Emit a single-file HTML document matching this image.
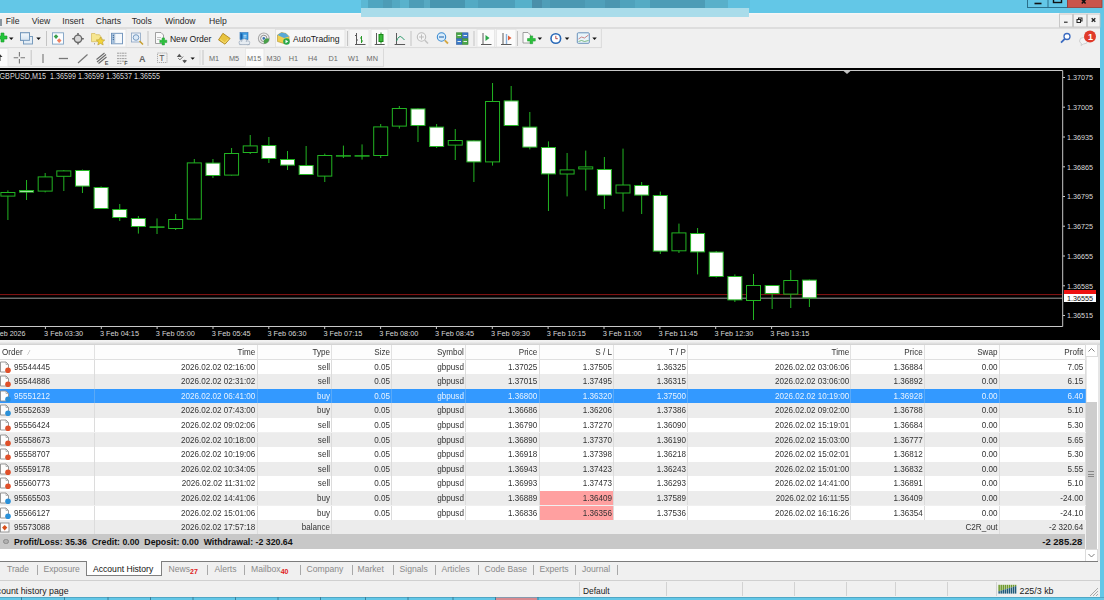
<!DOCTYPE html>
<html><head><meta charset="utf-8">
<style>
*{margin:0;padding:0;box-sizing:border-box}
html,body{width:1104px;height:600px;overflow:hidden;background:#f0f0f0;font-family:"Liberation Sans",sans-serif;color:#000}
.a{position:absolute}
#title{left:0;top:0;width:1104px;height:13px;background:#63c7e7}
#blurT{left:361px;top:0;width:389px;height:8.3px;background:linear-gradient(90deg,#5bb8d4 0.00%,#5bb8d4 1.80%,#4fa5c0 1.80%,#4fa5c0 5.66%,#4d9cb6 5.66%,#4d9cb6 7.97%,#53a8c2 7.97%,#53a8c2 10.03%,#58b2cc 10.03%,#58b2cc 12.34%,#4c9db7 12.34%,#4c9db7 16.20%,#56a9c2 16.20%,#56a9c2 17.74%,#4896b0 17.74%,#4896b0 26.74%,#53aac4 26.74%,#53aac4 30.08%,#4d9fba 30.08%,#4d9fba 39.59%,#56b0ca 39.59%,#56b0ca 43.96%,#4a8faa 43.96%,#4a8faa 46.53%,#509eb8 46.53%,#509eb8 48.59%,#4a98b2 48.59%,#4a98b2 57.58%,#4fa0ba 57.58%,#4fa0ba 62.72%,#4a96b0 62.72%,#4a96b0 66.58%,#4fa2bc 66.58%,#4fa2bc 70.44%,#55abc4 70.44%,#55abc4 74.29%,#4c9cb6 74.29%,#4c9cb6 88.43%,#58b0ca 88.43%,#58b0ca 94.34%,#60c0de 94.34%,#60c0de 100.00%);filter:blur(0.6px)}
#blurB{left:361px;top:8px;width:388px;height:9px;background:#a9dcea;z-index:4}
.wb{top:0;height:7.5px;border:1px solid #2a6f8a;border-top:none}
#rb{left:1100px;top:0;width:4px;height:600px;background:#63c7e7}
#menu{left:0;top:13px;width:1100px;height:15px;background:linear-gradient(#f8f8f8 0,#f0f0f0 2px)}
.mi{top:15.5px;font-size:8.6px;line-height:10px;color:#2a2a2a}
.mdi{top:13.6px;height:13.7px;width:13.6px;background:#f2f2f2;border:1px solid #c8c8c8;font-size:8px;text-align:center;line-height:12px;font-weight:bold}
.tb{background:#f0f0f0}
.sep{width:1px;background:#c9c9c9;border-right:1px solid #fff}
.tt{font-size:8.5px;line-height:10px;color:#1a1a1a}
.tf{font-size:7.6px;line-height:10px;color:#555;top:54px}
.pressed{background:#fafafa;border:1px solid #e3e3e3}
#chart{left:0;top:67.5px;width:1100px;height:272.5px;background:#000}
svg text.ct{font-family:"Liberation Sans",sans-serif;font-size:7.5px;fill:#d8d8d8}
.row{position:absolute;left:0;width:1085px;height:14.6px}
.vl{position:absolute;width:1px;height:14.6px;background:#dcdcdc}
.vl.vs{background:#5aa9f6}
.c{position:absolute;font-size:9.3px;letter-spacing:0;line-height:14.6px;text-align:right;white-space:nowrap;color:#333;transform:scaleX(0.87);transform-origin:100% 50%}
.c.l{transform-origin:0 50%}
.c.l{text-align:left}
.c.s{color:#e8f3ff}
.hv{position:absolute;top:344.5px;width:1px;height:15px;background:#e2e2e2}
.ic{position:absolute;left:1px;width:10px;height:11px}
.ic.sellic,.ic.buyic{border:1px solid #8a8a8a;border-radius:1px;background:#fff;width:8px;height:10px}
.ic i{position:absolute;left:3px;top:5px;width:6px;height:6px;border-radius:3px;background:#e05a2a}
.ic.buyic i{background:#2a8fd8}
.ic.bal{border:1px solid #9a9a9a;background:#fff;width:10px;height:10px}
.tab{top:563px;font-size:8.6px;line-height:13px;color:#8a8a8a}
.tsep{top:564.5px;width:1px;height:10px;background:#a8a8a8}
.sb{top:582.5px;height:16px;font-size:8.4px;line-height:16px;color:#1a1a1a}
.sbd{top:582px;width:1px;height:14px;background:#d2d2d2}
</style></head><body>
<div class="a" id="title"></div>
<div class="a" id="blurT"></div>
<div class="a" id="blurB"></div>
<div class="a" id="rb"></div>
<svg class="a" style="left:1020px;top:0;z-index:5" width="84" height="30" viewBox="1020 0 84 30">
<rect x="1027.5" y="-1" width="40" height="8.5" fill="#63c7e7" stroke="#2a6f8a" stroke-width="1"/>
<line x1="1048" y1="0" x2="1048" y2="7.5" stroke="#2a6f8a" stroke-width="1"/>
<rect x="1067.5" y="-1" width="34.5" height="8.5" fill="#c9544c" stroke="#9a3a34" stroke-width="0.8"/>
<path d="M1034.5 3.5 h7" stroke="#111" stroke-width="1.6"/>
<rect x="1053.5" y="-1" width="8" height="3.5" fill="none" stroke="#111" stroke-width="1.4"/>
<path d="M1081.8 -0.5 l3.8 4 M1085.6 -0.5 l-3.8 4" stroke="#111" stroke-width="1.6"/>
<rect x="1059.5" y="14" width="13" height="13" fill="#f2f2f2" stroke="#c4c4c4" stroke-width="0.9"/>
<rect x="1073.5" y="14" width="13" height="13" fill="#f2f2f2" stroke="#c4c4c4" stroke-width="0.9"/>
<rect x="1087.5" y="14" width="12.5" height="13" fill="#f2f2f2" stroke="#c4c4c4" stroke-width="0.9"/>
<path d="M1064 22.2 h3.6" stroke="#222" stroke-width="1.1"/>
<rect x="1078.5" y="18" width="3.5" height="3" fill="none" stroke="#222" stroke-width="1"/>
<rect x="1077" y="19.5" width="3.5" height="3" fill="#f2f2f2" stroke="#222" stroke-width="1"/>
<path d="M1091.7 18.2 l3.6 3.6 M1095.3 18.2 l-3.6 3.6" stroke="#222" stroke-width="1.3"/>
</svg>
<div class="a" id="menu"></div>
<div class="a" style="left:0;top:19px;width:1.8px;height:6.5px;background:#8a96a0"></div>
<div class="a mi" style="left:5.7px">File</div>
<div class="a mi" style="left:31.7px">View</div>
<div class="a mi" style="left:62.3px">Insert</div>
<div class="a mi" style="left:95.7px">Charts</div>
<div class="a mi" style="left:131.7px">Tools</div>
<div class="a mi" style="left:165px">Window</div>
<div class="a mi" style="left:209px">Help</div>

<svg class="a" style="left:0;top:0" width="1100" height="68" viewBox="0 0 1100 68">
<defs>
<linearGradient id="gwin" x1="0" y1="0" x2="0" y2="1"><stop offset="0" stop-color="#f4f8fc"/><stop offset="1" stop-color="#d6e4f0"/></linearGradient>
</defs>
<!-- toolbar frames -->
<line x1="0" y1="28" x2="1100" y2="28" stroke="#cacaca" stroke-width="1.1"/>
<line x1="0" y1="47.6" x2="601.4" y2="47.6" stroke="#dadada"/>
<line x1="601.4" y1="29" x2="601.4" y2="48" stroke="#dadada"/>
<line x1="0" y1="66.6" x2="383.5" y2="66.6" stroke="#dadada"/>
<line x1="383.5" y1="48.5" x2="383.5" y2="67" stroke="#dadada"/>
<!-- pressed backgrounds -->
<rect x="109" y="29.5" width="17" height="17.5" fill="#fbfbfb" stroke="#e4e4e4" stroke-width="0.8"/>
<rect x="275.4" y="29.5" width="69.6" height="17.5" fill="#f7f7f7" stroke="#dedede" stroke-width="0.8"/>
<rect x="349" y="29.5" width="20" height="17.5" fill="#f7f7f7" stroke="#e6e6e6" stroke-width="0.8"/>
<rect x="371" y="29.5" width="17" height="17.5" fill="#fbfbfb" stroke="#e4e4e4" stroke-width="0.8"/>
<rect x="477" y="29.5" width="17.6" height="17.5" fill="#fbfbfb" stroke="#e4e4e4" stroke-width="0.8"/>
<rect x="496.5" y="29.5" width="19.5" height="17.5" fill="#fbfbfb" stroke="#e4e4e4" stroke-width="0.8"/>
<rect x="-1" y="48.5" width="9" height="18" fill="#fbfbfb" stroke="#e4e4e4" stroke-width="0.8"/>
<rect x="245.5" y="48.5" width="18.5" height="18" fill="#fbfbfb" stroke="#e4e4e4" stroke-width="0.8"/>
<!-- separators -->
<g stroke="#c4c4c4" stroke-width="1">
<line x1="46.5" y1="31" x2="46.5" y2="46"/>
<line x1="148" y1="31" x2="148" y2="46"/>
<line x1="347.5" y1="31" x2="347.5" y2="46"/>
<line x1="411" y1="31" x2="411" y2="46"/>
<line x1="474" y1="31" x2="474" y2="46"/>
<line x1="517.5" y1="31" x2="517.5" y2="46"/>
<line x1="31.2" y1="50" x2="31.2" y2="65"/>
<line x1="200" y1="50" x2="200" y2="65" stroke="#dcdcdc"/>
<line x1="203" y1="50" x2="203" y2="65"/>
</g>
<!-- green plus (cut) -->
<path d="M-2 36 h3 v-3 h3 v3 h3 v3 h-3 v3 h-3 v-3 h-3z" fill="#22c43a" stroke="#179a2a" stroke-width="0.6"/>
<path d="M9 37.5 h4.5 l-2.25 2.5z" fill="#111"/>
<!-- profiles -->
<rect x="20.5" y="32.8" width="9" height="7.5" fill="url(#gwin)" stroke="#6e93b8" stroke-width="0.9"/>
<rect x="23.5" y="36.5" width="9" height="7.5" fill="#e3edf6" stroke="#6e93b8" stroke-width="0.9"/>
<rect x="20.5" y="32.8" width="9" height="7.5" fill="url(#gwin)" stroke="#6e93b8" stroke-width="0.9"/>
<path d="M36.3 37.5 h4.5 l-2.25 2.5z" fill="#111"/>
<!-- market watch -->
<rect x="52.5" y="32.8" width="11" height="11.3" fill="#fbfdff" stroke="#7ea2c4" stroke-width="0.9"/>
<path d="M53.7 36.6 l2.3 -2.3 l2.3 2.3 l-2.3 2.3z" fill="#3aa04a"/>
<path d="M56.9 40.6 l2.3 -2.3 l2.3 2.3 l-2.3 2.3z" fill="#f08060"/>
<!-- data window crosshair -->
<circle cx="78" cy="38.8" r="3.7" fill="#d8d8d8" stroke="#6a6a6a" stroke-width="1.4"/>
<path d="M78 33 v2 M78 42.6 v2 M72.2 38.8 h2 M81.8 38.8 h2" stroke="#6a6a6a" stroke-width="1.6"/>
<!-- navigator -->
<path d="M91.5 33.5 h3.5 l1 1.2 h3.5 l2.5 3.5 v3.5 h-10.5z" fill="#f6e690" stroke="#d2b85a" stroke-width="0.7"/><path d="M94.5 43 v1.5" stroke="#888" stroke-width="0.7"/>
<path d="M100.5 37 l1.3 2.7 l3 .3 l-2.3 2 l.7 3 l-2.7 -1.6 l-2.7 1.6 l.7 -3 l-2.3 -2 l3 -.3z" fill="#f2d43a" stroke="#b89a30" stroke-width="0.6"/>
<!-- terminal -->
<rect x="111.5" y="33.3" width="11" height="10.5" fill="#f4f8fc" stroke="#6a8fb8" stroke-width="0.9"/>
<rect x="112.2" y="34" width="2.3" height="9.2" fill="#9ab8d8"/><path d="M113.3 35 v1 M113.3 37 v1 M113.3 39 v1" stroke="#2a5a90" stroke-width="0.9"/><path d="M114.8 34 v9.2" stroke="#8aa0b8" stroke-width="0.5"/>
<!-- tester -->
<rect x="131.5" y="33" width="9" height="9" fill="#edf2f8" stroke="#8aa4c2" stroke-width="0.8"/>
<circle cx="136" cy="37.5" r="2.8" fill="#dce9f6" stroke="#5b86b4" stroke-width="0.8"/>
<path d="M139.5 41 l3.5 3.5" stroke="#c9a030" stroke-width="1.6"/>
<!-- new order -->
<path d="M155.5 32.5 h5.5 l2.5 2.5 v8.5 h-8z" fill="#fafafa" stroke="#8a8a8a" stroke-width="0.8"/>
<path d="M157 37.5 h4 M157 39.5 h3" stroke="#aaa" stroke-width="0.7"/><path d="M159.8 40.2 h2.3 v-2.3 h2.4 v2.3 h2.3 v2.4 h-2.3 v2.3 h-2.4 v-2.3 h-2.3z" fill="#2cc03c" stroke="#179a2a" stroke-width="0.5"/>
<text x="169.9" y="41.6" class="tt" style="font-size:8.6px;fill:#1a1a1a">New Order</text>
<!-- metaeditor -->
<path d="M218.5 39.9 l4.4 -6.6 l7.2 5.1 l-5.1 5.8z" fill="#e9c43e" stroke="#a87d12" stroke-width="0.8"/>
<path d="M220.5 39.5 l4.3 3.5 l3.5 -4" stroke="#f8e68a" stroke-width="0.8" fill="none"/>
<!-- community -->
<rect x="240" y="32.6" width="8" height="7" fill="#3a9ae0" stroke="#2570b8" stroke-width="0.6"/><path d="M243.5 35.3 h3 M243.5 37 h3" stroke="#e8f4ff" stroke-width="0.8"/><rect x="240.6" y="33.4" width="1.8" height="5.5" fill="#1a60a8"/>
<g fill="#e6ecf2" stroke="#9aa8ba" stroke-width="0.7"><circle cx="241" cy="42.6" r="2"/><circle cx="244.3" cy="41.5" r="2.7"/><circle cx="247.8" cy="42.8" r="2"/></g><rect x="240.5" y="42" width="7.5" height="2.6" fill="#e6ecf2"/><path d="M239.2 44.6 h10.5" stroke="#9aa8ba" stroke-width="0.7"/>
<!-- signals -->
<circle cx="263.8" cy="38.4" r="5.4" fill="none" stroke="#a8a8a8" stroke-width="1.1"/>
<circle cx="263.8" cy="38.4" r="3.2" fill="none" stroke="#909090" stroke-width="1"/><circle cx="263.8" cy="38.4" r="1.3" fill="#3a70b0"/>
<path d="M265.3 38.4 h3.9 a5.4 5.4 0 0 1 -5.4 5.4 v-3.9 a1.5 1.5 0 0 0 1.5 -1.5z" fill="#48a048"/>
<!-- autotrading -->
<path d="M277.5 35 l4 -2.5 l4.5 1 l3 3 v4 l-5 3 l-6.5 -2z" fill="#f0d050" stroke="#b09030" stroke-width="0.6"/>
<path d="M277.5 35 l4 -2.5 l4.5 1 l3 3 l-5 1.5z" fill="#58a8d8"/>
<circle cx="286.5" cy="41.5" r="3.3" fill="#2aa84a"/>
<path d="M285.5 39.8 v3.4 l2.8 -1.7z" fill="#fff"/>
<text x="293" y="41.6" class="tt" style="font-size:8.6px;fill:#1a1a1a">AutoTrading</text>
<!-- bar chart -->
<g stroke="#5a5a5a" stroke-width="1" fill="none">
<path d="M355 44.5 h10.5 M356.5 33 v11.5 M355 35.5 h1.5 M356.5 40 h1.5"/>
<path d="M361.5 36 v7 M360 38 h1.5 M361.5 41 h1.5" stroke="#2a9a2a"/>
</g>
<!-- candle chart -->
<g fill="none" stroke-width="1">
<path d="M374.7 44.5 h10 M376.5 33 v11.5" stroke="#5a5a5a"/>
<rect x="379" y="34.5" width="4" height="7" fill="#3aba3a" stroke="#1a8a1a"/>
<path d="M381 32.5 v2 M381 41.5 v2" stroke="#1a8a1a"/>
</g>
<!-- line chart -->
<g fill="none" stroke-width="1">
<path d="M394.6 44.5 h10.5 M396.5 33 v11.5" stroke="#5a5a5a"/>
<path d="M396.5 41 q2.5 -6 5 -4 l3 3" stroke="#2a9a6a"/>
</g>
<!-- zoom in (disabled) -->
<circle cx="421.5" cy="37" r="4.2" fill="#f4f4f4" stroke="#bdbdbd" stroke-width="1.1"/>
<path d="M419 37 h5 M421.5 34.5 v5" stroke="#bdbdbd" stroke-width="1"/>
<path d="M424.8 40.3 l3.2 3.2" stroke="#c4c4c4" stroke-width="1.6"/>
<!-- zoom out -->
<circle cx="441.5" cy="37" r="4.2" fill="#d8ecfb" stroke="#3a8ad0" stroke-width="1.1"/>
<path d="M439 37 h5" stroke="#2a6ab0" stroke-width="1.1"/>
<path d="M444.8 40.3 l3.2 3.2" stroke="#d4a640" stroke-width="1.8"/>
<!-- tile -->
<rect x="456.5" y="32.8" width="5.5" height="5.5" fill="#4aa84a" stroke="#2a7a2a" stroke-width="0.6"/>
<rect x="462.5" y="32.8" width="5.5" height="5.5" fill="#3a78c8" stroke="#2a5a9a" stroke-width="0.6"/>
<rect x="456.5" y="38.8" width="5.5" height="5.5" fill="#3a78c8" stroke="#2a5a9a" stroke-width="0.6"/>
<rect x="462.5" y="38.8" width="5.5" height="5.5" fill="#4aa84a" stroke="#2a7a2a" stroke-width="0.6"/>
<path d="M457.5 35.5 h3.5 M463.5 35.5 h3.5 M457.5 41.5 h3.5 M463.5 41.5 h3.5" stroke="#e8f0e8" stroke-width="1"/>
<!-- auto scroll -->
<path d="M481 44.5 h10.5 M483 33 v11.5" stroke="#5a5a5a" stroke-width="1"/>
<path d="M485.5 35 v6 l4 -3z" fill="#2aa84a"/>
<!-- chart shift -->
<path d="M501 44.5 h10.5 M503 33 v11.5 M506.5 34 v10" stroke="#5a5a5a" stroke-width="1"/>
<path d="M508 35.5 v5 l3.5 -2.5z" fill="#e0603a"/>
<rect x="505.8" y="34" width="1.4" height="10" fill="#8ab0d8"/>
<!-- indicators -->
<path d="M523 32.5 h5 l2.5 2.5 v8 h-7.5z" fill="#fafafa" stroke="#8a8a8a" stroke-width="0.8"/>
<path d="M527.5 38.5 h2.6 v-2.6 h2.6 v2.6 h2.6 v2.6 h-2.6 v2.6 h-2.6 v-2.6 h-2.6z" fill="#2cc03c" stroke="#179a2a" stroke-width="0.5"/>
<path d="M537.6 37.5 h4.5 l-2.25 2.5z" fill="#111"/>
<!-- clock -->
<circle cx="555.8" cy="38.5" r="5.6" fill="#2a6ab8"/>
<circle cx="555.8" cy="38.5" r="4" fill="#fff"/>
<path d="M555.8 35.8 v2.9 h2" stroke="#a02020" stroke-width="0.8" fill="none"/>
<path d="M564.8 37.5 h4.5 l-2.25 2.5z" fill="#111"/>
<!-- templates -->
<rect x="577.3" y="32.8" width="12" height="10.5" rx="1" fill="#e8f4fa" stroke="#5b86b4" stroke-width="0.9"/>
<path d="M578.5 39 l3 -2 l3 1 l4 -3" stroke="#c05050" stroke-width="0.7" fill="none"/>
<path d="M578.5 41.5 l3 -1 l3 1 l4 -1" stroke="#50a050" stroke-width="0.7" fill="none"/>
<path d="M592.3 37.5 h4.5 l-2.25 2.5z" fill="#111"/>
<!-- right side search / notification -->
<circle cx="1067" cy="36.5" r="3" fill="#fff" stroke="#3a6ac0" stroke-width="1.3"/>
<path d="M1064.8 38.8 l-3.8 3.8" stroke="#3a6ac0" stroke-width="1.8"/>
<path d="M1079.5 41 q0 -3.5 4 -3.5 q4 0 4 3.5 q0 3 -4 3 l-2.5 1.5 l.5 -2 q-2 -.8 -2 -2.5z" fill="#f4f4f4" stroke="#c8c8c8" stroke-width="0.8"/>
<circle cx="1090" cy="36.5" r="6" fill="#e03a2a"/>
<text x="1088" y="40" style="font-family:'Liberation Sans',sans-serif;font-size:9px;font-weight:bold;fill:#fff">1</text>

<!-- toolbar 2 -->
<path d="M-1 53 l3.5 4 h-2 v4 h-3 v-4 h-2z" fill="#333"/>
<path d="M19.4 52 v4.5 M19.4 59 v4.5 M13.7 57.8 h4.5 M20.5 57.8 h4.5" stroke="#777" stroke-width="1.1"/>
<path d="M43 54 v9" stroke="#888" stroke-width="1.3"/>
<path d="M58.8 58.5 h9.2" stroke="#777" stroke-width="1.3"/>
<path d="M78 63 l9.5 -8.5" stroke="#777" stroke-width="1.2"/>
<path d="M96.5 59.5 l8 -6.5 M97 62 l9 -7.5 M98.5 63.5 l8 -6.5" stroke="#6a6a6a" stroke-width="1.1"/>
<text x="104.8" y="64.5" style="font-family:'Liberation Sans',sans-serif;font-size:5.5px;font-weight:bold;fill:#555">E</text>
<path d="M117 53.2 h10 M117 55.8 h10 M117 58.6 h10 M117 61.2 h10 M117 63.5 h5" stroke="#8a8a8a" stroke-width="0.8" stroke-dasharray="2 0.5"/>
<text x="124.3" y="65" style="font-family:'Liberation Sans',sans-serif;font-size:5.5px;font-weight:bold;fill:#555">F</text>
<text x="139" y="61.5" style="font-family:'Liberation Sans',sans-serif;font-size:9px;font-weight:bold;fill:#666">A</text>
<rect x="157.5" y="53" width="9.5" height="9.5" fill="none" stroke="#999" stroke-width="0.8" stroke-dasharray="1.2 0.8"/>
<text x="159.3" y="61" style="font-family:'Liberation Sans',sans-serif;font-size:8.5px;fill:#555">T</text>
<path d="M176.8 57 l2.5 -3.3 l2.5 3.3z" fill="#555"/><path d="M178.3 58.2 l1.6 1.6 l3.2 -3.2" stroke="#666" stroke-width="1" fill="none"/><path d="M182.3 60.5 l2.35 -0.7 l2.35 0.7 l-2.35 2.8z" fill="#555"/>
<path d="M190.5 57.6 h4.3 l-2.15 2.2z" fill="#111"/>
<g style="font-family:'Liberation Sans',sans-serif;font-size:7.3px;fill:#6a6a6a">
<text x="209" y="61">M1</text>
<text x="229" y="61">M5</text>
<text x="247" y="61">M15</text>
<text x="266.6" y="61">M30</text>
<text x="288.7" y="61">H1</text>
<text x="308" y="61">H4</text>
<text x="328.5" y="61">D1</text>
<text x="348" y="61">W1</text>
<text x="366.6" y="61">MN</text>
</g>
</svg>


<div class="a" id="chart"></div>
<svg class="a" style="left:0;top:0" width="1100" height="341" viewBox="0 0 1100 341">
<text x="-0.5" y="78.8" class="ct" style="font-size:8.3px;white-space:pre" xml:space="preserve" textLength="160.5" lengthAdjust="spacingAndGlyphs">GBPUSD,M15  1.36599 1.36599 1.36537 1.36555</text>
<path d="M843 70.5 L851 70.5 L847 74 Z" fill="#c0c0c0"/>
<polyline points="0,70.5 1062.7,70.5 1062.7,326.5 0,326.5" fill="none" stroke="#c8c8c8" stroke-width="1"/>
<line x1="0" y1="294.6" x2="1062" y2="294.6" stroke="#8a1414" stroke-width="1"/>
<line x1="0" y1="298.2" x2="1062" y2="298.2" stroke="#9a9a9a" stroke-width="1"/>
<line x1="7.90" y1="190.4" x2="7.90" y2="220.0" stroke="#22b422" stroke-width="1"/>
<rect x="0.90" y="192.5" width="14" height="3.6" fill="#000" stroke="#22b422" stroke-width="1"/>
<line x1="26.54" y1="180.0" x2="26.54" y2="200.0" stroke="#22b422" stroke-width="1"/>
<rect x="19.54" y="190.5" width="14" height="1.6" fill="#fff" stroke="#22b422" stroke-width="1"/>
<line x1="45.18" y1="173.0" x2="45.18" y2="192.4" stroke="#22b422" stroke-width="1"/>
<rect x="38.18" y="176.9" width="14" height="14.2" fill="#000" stroke="#22b422" stroke-width="1"/>
<line x1="63.82" y1="170.0" x2="63.82" y2="191.0" stroke="#22b422" stroke-width="1"/>
<rect x="56.82" y="170.9" width="14" height="5.4" fill="#000" stroke="#22b422" stroke-width="1"/>
<line x1="82.46" y1="169.6" x2="82.46" y2="193.0" stroke="#22b422" stroke-width="1"/>
<rect x="75.46" y="170.5" width="14" height="15.6" fill="#fff" stroke="#22b422" stroke-width="1"/>
<line x1="101.10" y1="186.4" x2="101.10" y2="209.0" stroke="#22b422" stroke-width="1"/>
<rect x="94.10" y="187.5" width="14" height="21.0" fill="#fff" stroke="#22b422" stroke-width="1"/>
<line x1="119.74" y1="204.0" x2="119.74" y2="221.0" stroke="#22b422" stroke-width="1"/>
<rect x="112.74" y="209.5" width="14" height="8.0" fill="#fff" stroke="#22b422" stroke-width="1"/>
<line x1="138.38" y1="216.0" x2="138.38" y2="233.6" stroke="#22b422" stroke-width="1"/>
<rect x="131.38" y="218.5" width="14" height="8.0" fill="#fff" stroke="#22b422" stroke-width="1"/>
<line x1="157.02" y1="218.4" x2="157.02" y2="234.0" stroke="#22b422" stroke-width="1"/>
<line x1="149.52" y1="227.1" x2="164.52" y2="227.1" stroke="#22b422" stroke-width="1.5"/>
<line x1="175.66" y1="214.0" x2="175.66" y2="230.0" stroke="#22b422" stroke-width="1"/>
<rect x="168.66" y="219.5" width="14" height="9.0" fill="#000" stroke="#22b422" stroke-width="1"/>
<line x1="194.30" y1="159.0" x2="194.30" y2="219.6" stroke="#22b422" stroke-width="1"/>
<rect x="187.30" y="162.9" width="14" height="56.2" fill="#000" stroke="#22b422" stroke-width="1"/>
<line x1="212.94" y1="159.0" x2="212.94" y2="178.0" stroke="#22b422" stroke-width="1"/>
<rect x="205.94" y="163.1" width="14" height="12.4" fill="#fff" stroke="#22b422" stroke-width="1"/>
<line x1="231.58" y1="148.0" x2="231.58" y2="175.6" stroke="#22b422" stroke-width="1"/>
<rect x="224.58" y="153.5" width="14" height="21.6" fill="#000" stroke="#22b422" stroke-width="1"/>
<line x1="250.22" y1="135.0" x2="250.22" y2="154.0" stroke="#22b422" stroke-width="1"/>
<rect x="243.22" y="145.9" width="14" height="6.6" fill="#000" stroke="#22b422" stroke-width="1"/>
<line x1="268.86" y1="137.0" x2="268.86" y2="163.0" stroke="#22b422" stroke-width="1"/>
<rect x="261.86" y="145.5" width="14" height="13.0" fill="#fff" stroke="#22b422" stroke-width="1"/>
<line x1="287.50" y1="151.0" x2="287.50" y2="170.0" stroke="#22b422" stroke-width="1"/>
<rect x="280.50" y="159.5" width="14" height="5.6" fill="#fff" stroke="#22b422" stroke-width="1"/>
<line x1="306.14" y1="146.0" x2="306.14" y2="175.0" stroke="#22b422" stroke-width="1"/>
<rect x="299.14" y="165.5" width="14" height="9.0" fill="#fff" stroke="#22b422" stroke-width="1"/>
<line x1="324.78" y1="153.6" x2="324.78" y2="182.0" stroke="#22b422" stroke-width="1"/>
<rect x="317.78" y="155.5" width="14" height="20.6" fill="#000" stroke="#22b422" stroke-width="1"/>
<line x1="343.42" y1="145.6" x2="343.42" y2="158.0" stroke="#22b422" stroke-width="1"/>
<line x1="335.92" y1="155.9" x2="350.92" y2="155.9" stroke="#22b422" stroke-width="1.5"/>
<line x1="362.06" y1="144.4" x2="362.06" y2="159.6" stroke="#22b422" stroke-width="1"/>
<line x1="354.56" y1="155.9" x2="369.56" y2="155.9" stroke="#22b422" stroke-width="1.5"/>
<line x1="380.70" y1="124.0" x2="380.70" y2="158.0" stroke="#22b422" stroke-width="1"/>
<rect x="373.70" y="126.9" width="14" height="28.6" fill="#000" stroke="#22b422" stroke-width="1"/>
<line x1="399.34" y1="106.0" x2="399.34" y2="128.6" stroke="#22b422" stroke-width="1"/>
<rect x="392.34" y="108.5" width="14" height="17.6" fill="#000" stroke="#22b422" stroke-width="1"/>
<line x1="417.98" y1="108.4" x2="417.98" y2="142.0" stroke="#22b422" stroke-width="1"/>
<rect x="410.98" y="108.9" width="14" height="16.6" fill="#fff" stroke="#22b422" stroke-width="1"/>
<line x1="436.62" y1="124.0" x2="436.62" y2="148.0" stroke="#22b422" stroke-width="1"/>
<rect x="429.62" y="127.1" width="14" height="19.4" fill="#fff" stroke="#22b422" stroke-width="1"/>
<line x1="455.26" y1="129.0" x2="455.26" y2="160.0" stroke="#22b422" stroke-width="1"/>
<rect x="448.26" y="140.5" width="14" height="4.6" fill="#000" stroke="#22b422" stroke-width="1"/>
<line x1="473.90" y1="140.4" x2="473.90" y2="182.0" stroke="#22b422" stroke-width="1"/>
<rect x="466.90" y="140.9" width="14" height="21.0" fill="#fff" stroke="#22b422" stroke-width="1"/>
<line x1="492.54" y1="83.0" x2="492.54" y2="165.6" stroke="#22b422" stroke-width="1"/>
<rect x="485.54" y="101.5" width="14" height="60.4" fill="#000" stroke="#22b422" stroke-width="1"/>
<line x1="511.18" y1="86.0" x2="511.18" y2="126.0" stroke="#22b422" stroke-width="1"/>
<rect x="504.18" y="100.9" width="14" height="24.6" fill="#fff" stroke="#22b422" stroke-width="1"/>
<line x1="529.82" y1="112.0" x2="529.82" y2="149.4" stroke="#22b422" stroke-width="1"/>
<rect x="522.82" y="127.1" width="14" height="20.0" fill="#fff" stroke="#22b422" stroke-width="1"/>
<line x1="548.46" y1="141.4" x2="548.46" y2="211.0" stroke="#22b422" stroke-width="1"/>
<rect x="541.46" y="147.5" width="14" height="26.4" fill="#fff" stroke="#22b422" stroke-width="1"/>
<line x1="567.10" y1="153.0" x2="567.10" y2="196.4" stroke="#22b422" stroke-width="1"/>
<rect x="560.10" y="169.9" width="14" height="4.1" fill="#000" stroke="#22b422" stroke-width="1"/>
<line x1="585.74" y1="150.6" x2="585.74" y2="190.5" stroke="#22b422" stroke-width="1"/>
<rect x="578.74" y="166.9" width="14" height="2.0" fill="#000" stroke="#22b422" stroke-width="1"/>
<line x1="604.38" y1="157.0" x2="604.38" y2="209.0" stroke="#22b422" stroke-width="1"/>
<rect x="597.38" y="169.5" width="14" height="25.6" fill="#fff" stroke="#22b422" stroke-width="1"/>
<line x1="623.02" y1="148.6" x2="623.02" y2="211.6" stroke="#22b422" stroke-width="1"/>
<rect x="616.02" y="185.0" width="14" height="8.0" fill="#000" stroke="#22b422" stroke-width="1"/>
<line x1="641.66" y1="182.0" x2="641.66" y2="214.0" stroke="#22b422" stroke-width="1"/>
<rect x="634.66" y="185.5" width="14" height="9.6" fill="#fff" stroke="#22b422" stroke-width="1"/>
<line x1="660.30" y1="191.6" x2="660.30" y2="254.0" stroke="#22b422" stroke-width="1"/>
<rect x="653.30" y="195.5" width="14" height="55.6" fill="#fff" stroke="#22b422" stroke-width="1"/>
<line x1="678.94" y1="223.6" x2="678.94" y2="253.0" stroke="#22b422" stroke-width="1"/>
<rect x="671.94" y="232.9" width="14" height="17.9" fill="#000" stroke="#22b422" stroke-width="1"/>
<line x1="697.58" y1="228.0" x2="697.58" y2="274.4" stroke="#22b422" stroke-width="1"/>
<rect x="690.58" y="233.5" width="14" height="18.4" fill="#fff" stroke="#22b422" stroke-width="1"/>
<line x1="716.22" y1="251.0" x2="716.22" y2="277.6" stroke="#22b422" stroke-width="1"/>
<rect x="709.22" y="252.1" width="14" height="24.4" fill="#fff" stroke="#22b422" stroke-width="1"/>
<line x1="734.86" y1="274.4" x2="734.86" y2="302.0" stroke="#22b422" stroke-width="1"/>
<rect x="727.86" y="276.5" width="14" height="23.4" fill="#fff" stroke="#22b422" stroke-width="1"/>
<line x1="753.50" y1="274.0" x2="753.50" y2="320.0" stroke="#22b422" stroke-width="1"/>
<rect x="746.50" y="285.5" width="14" height="15.0" fill="#000" stroke="#22b422" stroke-width="1"/>
<line x1="772.14" y1="285.0" x2="772.14" y2="309.0" stroke="#22b422" stroke-width="1"/>
<rect x="765.14" y="285.5" width="14" height="8.0" fill="#fff" stroke="#22b422" stroke-width="1"/>
<line x1="790.78" y1="270.0" x2="790.78" y2="308.0" stroke="#22b422" stroke-width="1"/>
<rect x="783.78" y="280.5" width="14" height="13.6" fill="#000" stroke="#22b422" stroke-width="1"/>
<line x1="809.42" y1="279.6" x2="809.42" y2="307.0" stroke="#22b422" stroke-width="1"/>
<rect x="802.42" y="280.1" width="14" height="17.8" fill="#fff" stroke="#22b422" stroke-width="1"/>
<line x1="1063" y1="77.5" x2="1065" y2="77.5" stroke="#c8c8c8" stroke-width="1"/>
<text x="1067" y="80.3" class="ct" textLength="26.1" lengthAdjust="spacingAndGlyphs">1.37075</text>
<line x1="1063" y1="107.2" x2="1065" y2="107.2" stroke="#c8c8c8" stroke-width="1"/>
<text x="1067" y="110.0" class="ct" textLength="26.1" lengthAdjust="spacingAndGlyphs">1.37005</text>
<line x1="1063" y1="137.0" x2="1065" y2="137.0" stroke="#c8c8c8" stroke-width="1"/>
<text x="1067" y="139.8" class="ct" textLength="26.1" lengthAdjust="spacingAndGlyphs">1.36935</text>
<line x1="1063" y1="166.8" x2="1065" y2="166.8" stroke="#c8c8c8" stroke-width="1"/>
<text x="1067" y="169.6" class="ct" textLength="26.1" lengthAdjust="spacingAndGlyphs">1.36865</text>
<line x1="1063" y1="196.5" x2="1065" y2="196.5" stroke="#c8c8c8" stroke-width="1"/>
<text x="1067" y="199.3" class="ct" textLength="26.1" lengthAdjust="spacingAndGlyphs">1.36795</text>
<line x1="1063" y1="226.2" x2="1065" y2="226.2" stroke="#c8c8c8" stroke-width="1"/>
<text x="1067" y="229.1" class="ct" textLength="26.1" lengthAdjust="spacingAndGlyphs">1.36725</text>
<line x1="1063" y1="256.0" x2="1065" y2="256.0" stroke="#c8c8c8" stroke-width="1"/>
<text x="1067" y="258.8" class="ct" textLength="26.1" lengthAdjust="spacingAndGlyphs">1.36655</text>
<line x1="1063" y1="285.8" x2="1065" y2="285.8" stroke="#c8c8c8" stroke-width="1"/>
<text x="1067" y="288.6" class="ct" textLength="26.1" lengthAdjust="spacingAndGlyphs">1.36585</text>
<line x1="1063" y1="315.5" x2="1065" y2="315.5" stroke="#c8c8c8" stroke-width="1"/>
<text x="1067" y="318.3" class="ct" textLength="26.1" lengthAdjust="spacingAndGlyphs">1.36515</text>
<rect x="1064" y="290" width="32" height="4" fill="#ee1111"/>
<rect x="1064" y="294" width="32" height="8" fill="#fff"/>
<text x="1067" y="300.8" class="ct" style="fill:#111" textLength="26.1" lengthAdjust="spacingAndGlyphs">1.36555</text>
<line x1="45.4" y1="326" x2="45.4" y2="329" stroke="#c8c8c8" stroke-width="1"/>
<text x="44.1" y="335.5" class="ct" style="font-size:8px" textLength="39" lengthAdjust="spacingAndGlyphs">3 Feb 03:30</text>
<line x1="101.3" y1="326" x2="101.3" y2="329" stroke="#c8c8c8" stroke-width="1"/>
<text x="100.0" y="335.5" class="ct" style="font-size:8px" textLength="39" lengthAdjust="spacingAndGlyphs">3 Feb 04:15</text>
<line x1="157.1" y1="326" x2="157.1" y2="329" stroke="#c8c8c8" stroke-width="1"/>
<text x="155.8" y="335.5" class="ct" style="font-size:8px" textLength="39" lengthAdjust="spacingAndGlyphs">3 Feb 05:00</text>
<line x1="213.0" y1="326" x2="213.0" y2="329" stroke="#c8c8c8" stroke-width="1"/>
<text x="211.7" y="335.5" class="ct" style="font-size:8px" textLength="39" lengthAdjust="spacingAndGlyphs">3 Feb 05:45</text>
<line x1="268.8" y1="326" x2="268.8" y2="329" stroke="#c8c8c8" stroke-width="1"/>
<text x="267.5" y="335.5" class="ct" style="font-size:8px" textLength="39" lengthAdjust="spacingAndGlyphs">3 Feb 06:30</text>
<line x1="324.7" y1="326" x2="324.7" y2="329" stroke="#c8c8c8" stroke-width="1"/>
<text x="323.4" y="335.5" class="ct" style="font-size:8px" textLength="39" lengthAdjust="spacingAndGlyphs">3 Feb 07:15</text>
<line x1="380.6" y1="326" x2="380.6" y2="329" stroke="#c8c8c8" stroke-width="1"/>
<text x="379.3" y="335.5" class="ct" style="font-size:8px" textLength="39" lengthAdjust="spacingAndGlyphs">3 Feb 08:00</text>
<line x1="436.4" y1="326" x2="436.4" y2="329" stroke="#c8c8c8" stroke-width="1"/>
<text x="435.1" y="335.5" class="ct" style="font-size:8px" textLength="39" lengthAdjust="spacingAndGlyphs">3 Feb 08:45</text>
<line x1="492.3" y1="326" x2="492.3" y2="329" stroke="#c8c8c8" stroke-width="1"/>
<text x="491.0" y="335.5" class="ct" style="font-size:8px" textLength="39" lengthAdjust="spacingAndGlyphs">3 Feb 09:30</text>
<line x1="548.1" y1="326" x2="548.1" y2="329" stroke="#c8c8c8" stroke-width="1"/>
<text x="546.8" y="335.5" class="ct" style="font-size:8px" textLength="39" lengthAdjust="spacingAndGlyphs">3 Feb 10:15</text>
<line x1="604.0" y1="326" x2="604.0" y2="329" stroke="#c8c8c8" stroke-width="1"/>
<text x="602.7" y="335.5" class="ct" style="font-size:8px" textLength="39" lengthAdjust="spacingAndGlyphs">3 Feb 11:00</text>
<line x1="659.9" y1="326" x2="659.9" y2="329" stroke="#c8c8c8" stroke-width="1"/>
<text x="658.6" y="335.5" class="ct" style="font-size:8px" textLength="39" lengthAdjust="spacingAndGlyphs">3 Feb 11:45</text>
<line x1="715.7" y1="326" x2="715.7" y2="329" stroke="#c8c8c8" stroke-width="1"/>
<text x="714.4" y="335.5" class="ct" style="font-size:8px" textLength="39" lengthAdjust="spacingAndGlyphs">3 Feb 12:30</text>
<line x1="771.6" y1="326" x2="771.6" y2="329" stroke="#c8c8c8" stroke-width="1"/>
<text x="770.3" y="335.5" class="ct" style="font-size:8px" textLength="39" lengthAdjust="spacingAndGlyphs">3 Feb 13:15</text>
<text x="-10.5" y="335.7" class="ct" style="font-size:8px" textLength="36" lengthAdjust="spacingAndGlyphs">3 Feb 2026</text>
</svg>

<!-- terminal -->
<div class="a" style="left:0;top:340px;width:1100px;height:4.8px;background:linear-gradient(#f3f3f3 0,#f0f0f0 35%,#d6d6d6 85%,#d0d0d0 100%)"></div>
<div class="a" style="left:0;top:344.5px;width:1085px;height:15px;background:#fdfdfd;border-bottom:1px solid #e0e0e0"></div>
<div class="c l" style="left:2px;top:345.1px;line-height:14px;letter-spacing:0">Order <span style="color:#999;font-size:7px;margin-left:4px">&#8260;</span></div>
<div class="c" style="left:94.2px;width:161.3px;top:345.1px;line-height:14px;letter-spacing:0">Time</div>
<div class="hv" style="left:93.70px"></div>
<div class="c" style="left:257.5px;width:72.0px;top:345.1px;line-height:14px;letter-spacing:0">Type</div>
<div class="hv" style="left:257.00px"></div>
<div class="c" style="left:331.5px;width:58.0px;top:345.1px;line-height:14px;letter-spacing:0">Size</div>
<div class="hv" style="left:331.00px"></div>
<div class="c" style="left:391.5px;width:71.9px;top:345.1px;line-height:14px;letter-spacing:0">Symbol</div>
<div class="hv" style="left:391.00px"></div>
<div class="c" style="left:465.4px;width:72.2px;top:345.1px;line-height:14px;letter-spacing:0">Price</div>
<div class="hv" style="left:464.90px"></div>
<div class="c" style="left:539.6px;width:72.0px;top:345.1px;line-height:14px;letter-spacing:0">S / L</div>
<div class="hv" style="left:539.10px"></div>
<div class="c" style="left:613.6px;width:72.0px;top:345.1px;line-height:14px;letter-spacing:0">T / P</div>
<div class="hv" style="left:613.10px"></div>
<div class="c" style="left:687.6px;width:161.3px;top:345.1px;line-height:14px;letter-spacing:0">Time</div>
<div class="hv" style="left:687.10px"></div>
<div class="c" style="left:850.9px;width:71.7px;top:345.1px;line-height:14px;letter-spacing:0">Price</div>
<div class="hv" style="left:850.40px"></div>
<div class="c" style="left:924.6px;width:72.4px;top:345.1px;line-height:14px;letter-spacing:0">Swap</div>
<div class="hv" style="left:924.10px"></div>
<div class="c" style="left:999.0px;width:84.2px;top:345.1px;line-height:14px;letter-spacing:0">Profit</div>
<div class="hv" style="left:998.50px"></div>
<div class="hv" style="left:1084.80px"></div>
<div class="row" style="top:359.5px;background:#ffffff"></div>
<div class="vl" style="left:93.70px;top:359.5px"></div>
<div class="vl" style="left:257.00px;top:359.5px"></div>
<div class="vl" style="left:331.00px;top:359.5px"></div>
<div class="vl" style="left:391.00px;top:359.5px"></div>
<div class="vl" style="left:464.90px;top:359.5px"></div>
<div class="vl" style="left:539.10px;top:359.5px"></div>
<div class="vl" style="left:613.10px;top:359.5px"></div>
<div class="vl" style="left:687.10px;top:359.5px"></div>
<div class="vl" style="left:850.40px;top:359.5px"></div>
<div class="vl" style="left:924.10px;top:359.5px"></div>
<div class="vl" style="left:998.50px;top:359.5px"></div>
<div class="vl" style="left:1084.80px;top:359.5px"></div>
<svg class="a" style="left:0;top:359.5px" width="13" height="15"><path d="M0.5 2 h5.5 l2.5 2.5 v7.5 h-8z" fill="#fdfdfd" stroke="#8c8c8c" stroke-width="0.9"/><path d="M6 2 v2.5 h2.5" fill="none" stroke="#9a9a9a" stroke-width="0.7"/><circle cx="8" cy="10.3" r="2.8" fill="#e0502a"/></svg>
<div class="c l" style="left:14px;top:359.6px">95544445</div>
<div class="c " style="left:94.2px;width:161.3px;top:359.6px">2026.02.02 02:16:00</div>
<div class="c " style="left:257.5px;width:72.0px;top:359.6px">sell</div>
<div class="c " style="left:331.5px;width:58.0px;top:359.6px">0.05</div>
<div class="c " style="left:391.5px;width:71.9px;top:359.6px">gbpusd</div>
<div class="c " style="left:465.4px;width:72.2px;top:359.6px">1.37025</div>
<div class="c " style="left:539.6px;width:72.0px;top:359.6px">1.37505</div>
<div class="c " style="left:613.6px;width:72.0px;top:359.6px">1.36325</div>
<div class="c " style="left:687.6px;width:161.3px;top:359.6px">2026.02.02 03:06:06</div>
<div class="c " style="left:850.9px;width:71.7px;top:359.6px">1.36884</div>
<div class="c " style="left:924.6px;width:72.4px;top:359.6px">0.00</div>
<div class="c " style="left:999.0px;width:84.2px;top:359.6px">7.05</div>
<div class="row" style="top:374.1px;background:#ececec"></div>
<div class="vl" style="left:93.70px;top:374.1px"></div>
<div class="vl" style="left:257.00px;top:374.1px"></div>
<div class="vl" style="left:331.00px;top:374.1px"></div>
<div class="vl" style="left:391.00px;top:374.1px"></div>
<div class="vl" style="left:464.90px;top:374.1px"></div>
<div class="vl" style="left:539.10px;top:374.1px"></div>
<div class="vl" style="left:613.10px;top:374.1px"></div>
<div class="vl" style="left:687.10px;top:374.1px"></div>
<div class="vl" style="left:850.40px;top:374.1px"></div>
<div class="vl" style="left:924.10px;top:374.1px"></div>
<div class="vl" style="left:998.50px;top:374.1px"></div>
<div class="vl" style="left:1084.80px;top:374.1px"></div>
<svg class="a" style="left:0;top:374.1px" width="13" height="15"><path d="M0.5 2 h5.5 l2.5 2.5 v7.5 h-8z" fill="#fdfdfd" stroke="#8c8c8c" stroke-width="0.9"/><path d="M6 2 v2.5 h2.5" fill="none" stroke="#9a9a9a" stroke-width="0.7"/><circle cx="8" cy="10.3" r="2.8" fill="#e0502a"/></svg>
<div class="c l" style="left:14px;top:374.2px">95544886</div>
<div class="c " style="left:94.2px;width:161.3px;top:374.2px">2026.02.02 02:31:02</div>
<div class="c " style="left:257.5px;width:72.0px;top:374.2px">sell</div>
<div class="c " style="left:331.5px;width:58.0px;top:374.2px">0.05</div>
<div class="c " style="left:391.5px;width:71.9px;top:374.2px">gbpusd</div>
<div class="c " style="left:465.4px;width:72.2px;top:374.2px">1.37015</div>
<div class="c " style="left:539.6px;width:72.0px;top:374.2px">1.37495</div>
<div class="c " style="left:613.6px;width:72.0px;top:374.2px">1.36315</div>
<div class="c " style="left:687.6px;width:161.3px;top:374.2px">2026.02.02 03:06:00</div>
<div class="c " style="left:850.9px;width:71.7px;top:374.2px">1.36892</div>
<div class="c " style="left:924.6px;width:72.4px;top:374.2px">0.00</div>
<div class="c " style="left:999.0px;width:84.2px;top:374.2px">6.15</div>
<div class="row" style="top:388.7px;background:#3399ff"></div>
<div class="vl vs" style="left:93.70px;top:388.7px"></div>
<div class="vl vs" style="left:257.00px;top:388.7px"></div>
<div class="vl vs" style="left:331.00px;top:388.7px"></div>
<div class="vl vs" style="left:391.00px;top:388.7px"></div>
<div class="vl vs" style="left:464.90px;top:388.7px"></div>
<div class="vl vs" style="left:539.10px;top:388.7px"></div>
<div class="vl vs" style="left:613.10px;top:388.7px"></div>
<div class="vl vs" style="left:687.10px;top:388.7px"></div>
<div class="vl vs" style="left:850.40px;top:388.7px"></div>
<div class="vl vs" style="left:924.10px;top:388.7px"></div>
<div class="vl vs" style="left:998.50px;top:388.7px"></div>
<div class="vl vs" style="left:1084.80px;top:388.7px"></div>
<svg class="a" style="left:0;top:388.7px" width="13" height="15"><path d="M0.5 2 h5.5 l2.5 2.5 v7.5 h-8z" fill="#fdfdfd" stroke="#8c8c8c" stroke-width="0.9"/><path d="M6 2 v2.5 h2.5" fill="none" stroke="#9a9a9a" stroke-width="0.7"/><circle cx="8" cy="10.3" r="2.8" fill="#2a90d8"/></svg>
<div class="c l s" style="left:14px;top:388.8px">95551212</div>
<div class="c s" style="left:94.2px;width:161.3px;top:388.8px">2026.02.02 06:41:00</div>
<div class="c s" style="left:257.5px;width:72.0px;top:388.8px">buy</div>
<div class="c s" style="left:331.5px;width:58.0px;top:388.8px">0.05</div>
<div class="c s" style="left:391.5px;width:71.9px;top:388.8px">gbpusd</div>
<div class="c s" style="left:465.4px;width:72.2px;top:388.8px">1.36800</div>
<div class="c s" style="left:539.6px;width:72.0px;top:388.8px">1.36320</div>
<div class="c s" style="left:613.6px;width:72.0px;top:388.8px">1.37500</div>
<div class="c s" style="left:687.6px;width:161.3px;top:388.8px">2026.02.02 10:19:00</div>
<div class="c s" style="left:850.9px;width:71.7px;top:388.8px">1.36928</div>
<div class="c s" style="left:924.6px;width:72.4px;top:388.8px">0.00</div>
<div class="c s" style="left:999.0px;width:84.2px;top:388.8px">6.40</div>
<div class="row" style="top:403.3px;background:#ececec"></div>
<div class="vl" style="left:93.70px;top:403.3px"></div>
<div class="vl" style="left:257.00px;top:403.3px"></div>
<div class="vl" style="left:331.00px;top:403.3px"></div>
<div class="vl" style="left:391.00px;top:403.3px"></div>
<div class="vl" style="left:464.90px;top:403.3px"></div>
<div class="vl" style="left:539.10px;top:403.3px"></div>
<div class="vl" style="left:613.10px;top:403.3px"></div>
<div class="vl" style="left:687.10px;top:403.3px"></div>
<div class="vl" style="left:850.40px;top:403.3px"></div>
<div class="vl" style="left:924.10px;top:403.3px"></div>
<div class="vl" style="left:998.50px;top:403.3px"></div>
<div class="vl" style="left:1084.80px;top:403.3px"></div>
<svg class="a" style="left:0;top:403.3px" width="13" height="15"><path d="M0.5 2 h5.5 l2.5 2.5 v7.5 h-8z" fill="#fdfdfd" stroke="#8c8c8c" stroke-width="0.9"/><path d="M6 2 v2.5 h2.5" fill="none" stroke="#9a9a9a" stroke-width="0.7"/><circle cx="8" cy="10.3" r="2.8" fill="#2a90d8"/></svg>
<div class="c l" style="left:14px;top:403.4px">95552639</div>
<div class="c " style="left:94.2px;width:161.3px;top:403.4px">2026.02.02 07:43:00</div>
<div class="c " style="left:257.5px;width:72.0px;top:403.4px">buy</div>
<div class="c " style="left:331.5px;width:58.0px;top:403.4px">0.05</div>
<div class="c " style="left:391.5px;width:71.9px;top:403.4px">gbpusd</div>
<div class="c " style="left:465.4px;width:72.2px;top:403.4px">1.36686</div>
<div class="c " style="left:539.6px;width:72.0px;top:403.4px">1.36206</div>
<div class="c " style="left:613.6px;width:72.0px;top:403.4px">1.37386</div>
<div class="c " style="left:687.6px;width:161.3px;top:403.4px">2026.02.02 09:02:00</div>
<div class="c " style="left:850.9px;width:71.7px;top:403.4px">1.36788</div>
<div class="c " style="left:924.6px;width:72.4px;top:403.4px">0.00</div>
<div class="c " style="left:999.0px;width:84.2px;top:403.4px">5.10</div>
<div class="row" style="top:417.9px;background:#ffffff"></div>
<div class="vl" style="left:93.70px;top:417.9px"></div>
<div class="vl" style="left:257.00px;top:417.9px"></div>
<div class="vl" style="left:331.00px;top:417.9px"></div>
<div class="vl" style="left:391.00px;top:417.9px"></div>
<div class="vl" style="left:464.90px;top:417.9px"></div>
<div class="vl" style="left:539.10px;top:417.9px"></div>
<div class="vl" style="left:613.10px;top:417.9px"></div>
<div class="vl" style="left:687.10px;top:417.9px"></div>
<div class="vl" style="left:850.40px;top:417.9px"></div>
<div class="vl" style="left:924.10px;top:417.9px"></div>
<div class="vl" style="left:998.50px;top:417.9px"></div>
<div class="vl" style="left:1084.80px;top:417.9px"></div>
<svg class="a" style="left:0;top:417.9px" width="13" height="15"><path d="M0.5 2 h5.5 l2.5 2.5 v7.5 h-8z" fill="#fdfdfd" stroke="#8c8c8c" stroke-width="0.9"/><path d="M6 2 v2.5 h2.5" fill="none" stroke="#9a9a9a" stroke-width="0.7"/><circle cx="8" cy="10.3" r="2.8" fill="#e0502a"/></svg>
<div class="c l" style="left:14px;top:418.0px">95556424</div>
<div class="c " style="left:94.2px;width:161.3px;top:418.0px">2026.02.02 09:02:06</div>
<div class="c " style="left:257.5px;width:72.0px;top:418.0px">sell</div>
<div class="c " style="left:331.5px;width:58.0px;top:418.0px">0.05</div>
<div class="c " style="left:391.5px;width:71.9px;top:418.0px">gbpusd</div>
<div class="c " style="left:465.4px;width:72.2px;top:418.0px">1.36790</div>
<div class="c " style="left:539.6px;width:72.0px;top:418.0px">1.37270</div>
<div class="c " style="left:613.6px;width:72.0px;top:418.0px">1.36090</div>
<div class="c " style="left:687.6px;width:161.3px;top:418.0px">2026.02.02 15:19:01</div>
<div class="c " style="left:850.9px;width:71.7px;top:418.0px">1.36684</div>
<div class="c " style="left:924.6px;width:72.4px;top:418.0px">0.00</div>
<div class="c " style="left:999.0px;width:84.2px;top:418.0px">5.30</div>
<div class="row" style="top:432.5px;background:#ececec"></div>
<div class="vl" style="left:93.70px;top:432.5px"></div>
<div class="vl" style="left:257.00px;top:432.5px"></div>
<div class="vl" style="left:331.00px;top:432.5px"></div>
<div class="vl" style="left:391.00px;top:432.5px"></div>
<div class="vl" style="left:464.90px;top:432.5px"></div>
<div class="vl" style="left:539.10px;top:432.5px"></div>
<div class="vl" style="left:613.10px;top:432.5px"></div>
<div class="vl" style="left:687.10px;top:432.5px"></div>
<div class="vl" style="left:850.40px;top:432.5px"></div>
<div class="vl" style="left:924.10px;top:432.5px"></div>
<div class="vl" style="left:998.50px;top:432.5px"></div>
<div class="vl" style="left:1084.80px;top:432.5px"></div>
<svg class="a" style="left:0;top:432.5px" width="13" height="15"><path d="M0.5 2 h5.5 l2.5 2.5 v7.5 h-8z" fill="#fdfdfd" stroke="#8c8c8c" stroke-width="0.9"/><path d="M6 2 v2.5 h2.5" fill="none" stroke="#9a9a9a" stroke-width="0.7"/><circle cx="8" cy="10.3" r="2.8" fill="#e0502a"/></svg>
<div class="c l" style="left:14px;top:432.6px">95558673</div>
<div class="c " style="left:94.2px;width:161.3px;top:432.6px">2026.02.02 10:18:00</div>
<div class="c " style="left:257.5px;width:72.0px;top:432.6px">sell</div>
<div class="c " style="left:331.5px;width:58.0px;top:432.6px">0.05</div>
<div class="c " style="left:391.5px;width:71.9px;top:432.6px">gbpusd</div>
<div class="c " style="left:465.4px;width:72.2px;top:432.6px">1.36890</div>
<div class="c " style="left:539.6px;width:72.0px;top:432.6px">1.37370</div>
<div class="c " style="left:613.6px;width:72.0px;top:432.6px">1.36190</div>
<div class="c " style="left:687.6px;width:161.3px;top:432.6px">2026.02.02 15:03:00</div>
<div class="c " style="left:850.9px;width:71.7px;top:432.6px">1.36777</div>
<div class="c " style="left:924.6px;width:72.4px;top:432.6px">0.00</div>
<div class="c " style="left:999.0px;width:84.2px;top:432.6px">5.65</div>
<div class="row" style="top:447.1px;background:#ffffff"></div>
<div class="vl" style="left:93.70px;top:447.1px"></div>
<div class="vl" style="left:257.00px;top:447.1px"></div>
<div class="vl" style="left:331.00px;top:447.1px"></div>
<div class="vl" style="left:391.00px;top:447.1px"></div>
<div class="vl" style="left:464.90px;top:447.1px"></div>
<div class="vl" style="left:539.10px;top:447.1px"></div>
<div class="vl" style="left:613.10px;top:447.1px"></div>
<div class="vl" style="left:687.10px;top:447.1px"></div>
<div class="vl" style="left:850.40px;top:447.1px"></div>
<div class="vl" style="left:924.10px;top:447.1px"></div>
<div class="vl" style="left:998.50px;top:447.1px"></div>
<div class="vl" style="left:1084.80px;top:447.1px"></div>
<svg class="a" style="left:0;top:447.1px" width="13" height="15"><path d="M0.5 2 h5.5 l2.5 2.5 v7.5 h-8z" fill="#fdfdfd" stroke="#8c8c8c" stroke-width="0.9"/><path d="M6 2 v2.5 h2.5" fill="none" stroke="#9a9a9a" stroke-width="0.7"/><circle cx="8" cy="10.3" r="2.8" fill="#e0502a"/></svg>
<div class="c l" style="left:14px;top:447.2px">95558707</div>
<div class="c " style="left:94.2px;width:161.3px;top:447.2px">2026.02.02 10:19:06</div>
<div class="c " style="left:257.5px;width:72.0px;top:447.2px">sell</div>
<div class="c " style="left:331.5px;width:58.0px;top:447.2px">0.05</div>
<div class="c " style="left:391.5px;width:71.9px;top:447.2px">gbpusd</div>
<div class="c " style="left:465.4px;width:72.2px;top:447.2px">1.36918</div>
<div class="c " style="left:539.6px;width:72.0px;top:447.2px">1.37398</div>
<div class="c " style="left:613.6px;width:72.0px;top:447.2px">1.36218</div>
<div class="c " style="left:687.6px;width:161.3px;top:447.2px">2026.02.02 15:02:01</div>
<div class="c " style="left:850.9px;width:71.7px;top:447.2px">1.36812</div>
<div class="c " style="left:924.6px;width:72.4px;top:447.2px">0.00</div>
<div class="c " style="left:999.0px;width:84.2px;top:447.2px">5.30</div>
<div class="row" style="top:461.7px;background:#ececec"></div>
<div class="vl" style="left:93.70px;top:461.7px"></div>
<div class="vl" style="left:257.00px;top:461.7px"></div>
<div class="vl" style="left:331.00px;top:461.7px"></div>
<div class="vl" style="left:391.00px;top:461.7px"></div>
<div class="vl" style="left:464.90px;top:461.7px"></div>
<div class="vl" style="left:539.10px;top:461.7px"></div>
<div class="vl" style="left:613.10px;top:461.7px"></div>
<div class="vl" style="left:687.10px;top:461.7px"></div>
<div class="vl" style="left:850.40px;top:461.7px"></div>
<div class="vl" style="left:924.10px;top:461.7px"></div>
<div class="vl" style="left:998.50px;top:461.7px"></div>
<div class="vl" style="left:1084.80px;top:461.7px"></div>
<svg class="a" style="left:0;top:461.7px" width="13" height="15"><path d="M0.5 2 h5.5 l2.5 2.5 v7.5 h-8z" fill="#fdfdfd" stroke="#8c8c8c" stroke-width="0.9"/><path d="M6 2 v2.5 h2.5" fill="none" stroke="#9a9a9a" stroke-width="0.7"/><circle cx="8" cy="10.3" r="2.8" fill="#e0502a"/></svg>
<div class="c l" style="left:14px;top:461.8px">95559178</div>
<div class="c " style="left:94.2px;width:161.3px;top:461.8px">2026.02.02 10:34:05</div>
<div class="c " style="left:257.5px;width:72.0px;top:461.8px">sell</div>
<div class="c " style="left:331.5px;width:58.0px;top:461.8px">0.05</div>
<div class="c " style="left:391.5px;width:71.9px;top:461.8px">gbpusd</div>
<div class="c " style="left:465.4px;width:72.2px;top:461.8px">1.36943</div>
<div class="c " style="left:539.6px;width:72.0px;top:461.8px">1.37423</div>
<div class="c " style="left:613.6px;width:72.0px;top:461.8px">1.36243</div>
<div class="c " style="left:687.6px;width:161.3px;top:461.8px">2026.02.02 15:01:00</div>
<div class="c " style="left:850.9px;width:71.7px;top:461.8px">1.36832</div>
<div class="c " style="left:924.6px;width:72.4px;top:461.8px">0.00</div>
<div class="c " style="left:999.0px;width:84.2px;top:461.8px">5.55</div>
<div class="row" style="top:476.3px;background:#ffffff"></div>
<div class="vl" style="left:93.70px;top:476.3px"></div>
<div class="vl" style="left:257.00px;top:476.3px"></div>
<div class="vl" style="left:331.00px;top:476.3px"></div>
<div class="vl" style="left:391.00px;top:476.3px"></div>
<div class="vl" style="left:464.90px;top:476.3px"></div>
<div class="vl" style="left:539.10px;top:476.3px"></div>
<div class="vl" style="left:613.10px;top:476.3px"></div>
<div class="vl" style="left:687.10px;top:476.3px"></div>
<div class="vl" style="left:850.40px;top:476.3px"></div>
<div class="vl" style="left:924.10px;top:476.3px"></div>
<div class="vl" style="left:998.50px;top:476.3px"></div>
<div class="vl" style="left:1084.80px;top:476.3px"></div>
<svg class="a" style="left:0;top:476.3px" width="13" height="15"><path d="M0.5 2 h5.5 l2.5 2.5 v7.5 h-8z" fill="#fdfdfd" stroke="#8c8c8c" stroke-width="0.9"/><path d="M6 2 v2.5 h2.5" fill="none" stroke="#9a9a9a" stroke-width="0.7"/><circle cx="8" cy="10.3" r="2.8" fill="#e0502a"/></svg>
<div class="c l" style="left:14px;top:476.4px">95560773</div>
<div class="c " style="left:94.2px;width:161.3px;top:476.4px">2026.02.02 11:31:02</div>
<div class="c " style="left:257.5px;width:72.0px;top:476.4px">sell</div>
<div class="c " style="left:331.5px;width:58.0px;top:476.4px">0.05</div>
<div class="c " style="left:391.5px;width:71.9px;top:476.4px">gbpusd</div>
<div class="c " style="left:465.4px;width:72.2px;top:476.4px">1.36993</div>
<div class="c " style="left:539.6px;width:72.0px;top:476.4px">1.37473</div>
<div class="c " style="left:613.6px;width:72.0px;top:476.4px">1.36293</div>
<div class="c " style="left:687.6px;width:161.3px;top:476.4px">2026.02.02 14:41:00</div>
<div class="c " style="left:850.9px;width:71.7px;top:476.4px">1.36891</div>
<div class="c " style="left:924.6px;width:72.4px;top:476.4px">0.00</div>
<div class="c " style="left:999.0px;width:84.2px;top:476.4px">5.10</div>
<div class="row" style="top:490.9px;background:#ececec"></div>
<div class="row" style="top:490.9px;left:539.6px;width:73.0px;background:#ffa0a0"></div>
<div class="vl" style="left:93.70px;top:490.9px"></div>
<div class="vl" style="left:257.00px;top:490.9px"></div>
<div class="vl" style="left:331.00px;top:490.9px"></div>
<div class="vl" style="left:391.00px;top:490.9px"></div>
<div class="vl" style="left:464.90px;top:490.9px"></div>
<div class="vl" style="left:539.10px;top:490.9px"></div>
<div class="vl" style="left:613.10px;top:490.9px"></div>
<div class="vl" style="left:687.10px;top:490.9px"></div>
<div class="vl" style="left:850.40px;top:490.9px"></div>
<div class="vl" style="left:924.10px;top:490.9px"></div>
<div class="vl" style="left:998.50px;top:490.9px"></div>
<div class="vl" style="left:1084.80px;top:490.9px"></div>
<svg class="a" style="left:0;top:490.9px" width="13" height="15"><path d="M0.5 2 h5.5 l2.5 2.5 v7.5 h-8z" fill="#fdfdfd" stroke="#8c8c8c" stroke-width="0.9"/><path d="M6 2 v2.5 h2.5" fill="none" stroke="#9a9a9a" stroke-width="0.7"/><circle cx="8" cy="10.3" r="2.8" fill="#2a90d8"/></svg>
<div class="c l" style="left:14px;top:491.0px">95565503</div>
<div class="c " style="left:94.2px;width:161.3px;top:491.0px">2026.02.02 14:41:06</div>
<div class="c " style="left:257.5px;width:72.0px;top:491.0px">buy</div>
<div class="c " style="left:331.5px;width:58.0px;top:491.0px">0.05</div>
<div class="c " style="left:391.5px;width:71.9px;top:491.0px">gbpusd</div>
<div class="c " style="left:465.4px;width:72.2px;top:491.0px">1.36889</div>
<div class="c " style="left:539.6px;width:72.0px;top:491.0px">1.36409</div>
<div class="c " style="left:613.6px;width:72.0px;top:491.0px">1.37589</div>
<div class="c " style="left:687.6px;width:161.3px;top:491.0px">2026.02.02 16:11:55</div>
<div class="c " style="left:850.9px;width:71.7px;top:491.0px">1.36409</div>
<div class="c " style="left:924.6px;width:72.4px;top:491.0px">0.00</div>
<div class="c " style="left:999.0px;width:84.2px;top:491.0px">-24.00</div>
<div class="row" style="top:505.5px;background:#ffffff"></div>
<div class="row" style="top:505.5px;left:539.6px;width:73.0px;background:#ffa0a0"></div>
<div class="vl" style="left:93.70px;top:505.5px"></div>
<div class="vl" style="left:257.00px;top:505.5px"></div>
<div class="vl" style="left:331.00px;top:505.5px"></div>
<div class="vl" style="left:391.00px;top:505.5px"></div>
<div class="vl" style="left:464.90px;top:505.5px"></div>
<div class="vl" style="left:539.10px;top:505.5px"></div>
<div class="vl" style="left:613.10px;top:505.5px"></div>
<div class="vl" style="left:687.10px;top:505.5px"></div>
<div class="vl" style="left:850.40px;top:505.5px"></div>
<div class="vl" style="left:924.10px;top:505.5px"></div>
<div class="vl" style="left:998.50px;top:505.5px"></div>
<div class="vl" style="left:1084.80px;top:505.5px"></div>
<svg class="a" style="left:0;top:505.5px" width="13" height="15"><path d="M0.5 2 h5.5 l2.5 2.5 v7.5 h-8z" fill="#fdfdfd" stroke="#8c8c8c" stroke-width="0.9"/><path d="M6 2 v2.5 h2.5" fill="none" stroke="#9a9a9a" stroke-width="0.7"/><circle cx="8" cy="10.3" r="2.8" fill="#2a90d8"/></svg>
<div class="c l" style="left:14px;top:505.6px">95566127</div>
<div class="c " style="left:94.2px;width:161.3px;top:505.6px">2026.02.02 15:01:06</div>
<div class="c " style="left:257.5px;width:72.0px;top:505.6px">buy</div>
<div class="c " style="left:331.5px;width:58.0px;top:505.6px">0.05</div>
<div class="c " style="left:391.5px;width:71.9px;top:505.6px">gbpusd</div>
<div class="c " style="left:465.4px;width:72.2px;top:505.6px">1.36836</div>
<div class="c " style="left:539.6px;width:72.0px;top:505.6px">1.36356</div>
<div class="c " style="left:613.6px;width:72.0px;top:505.6px">1.37536</div>
<div class="c " style="left:687.6px;width:161.3px;top:505.6px">2026.02.02 16:16:26</div>
<div class="c " style="left:850.9px;width:71.7px;top:505.6px">1.36354</div>
<div class="c " style="left:924.6px;width:72.4px;top:505.6px">0.00</div>
<div class="c " style="left:999.0px;width:84.2px;top:505.6px">-24.10</div>
<div class="row" style="top:520.1px;background:#ececec"></div>
<svg class="a" style="left:0;top:520.1px" width="13" height="15"><rect x="0.5" y="3" width="8.5" height="9" fill="#fdfdfd" stroke="#8c8c8c" stroke-width="0.9"/><path d="M4.7 5 l2.6 2.6 l-2.6 2.8 l-2.6 -2.8z" fill="#d8501a"/></svg>
<div class="c l" style="left:14px;top:520.2px">95573088</div>
<div class="c " style="left:94.2px;width:161.3px;top:520.2px">2026.02.02 17:57:18</div>
<div class="c " style="left:257.5px;width:72.0px;top:520.2px">balance</div>
<div class="c " style="left:924.6px;width:72.4px;top:520.2px">C2R_out</div>
<div class="c " style="left:999.0px;width:84.2px;top:520.2px">-2 320.64</div>
<div class="vl" style="left:93.70px;top:520.1px"></div>
<div class="vl" style="left:257.00px;top:520.1px"></div>
<div class="vl" style="left:331.00px;top:520.1px"></div>
<div class="vl" style="left:998.50px;top:520.1px"></div>
<div class="a" style="left:0;top:534.3px;width:1085px;height:15px;background:#c8c8c8"></div>
<div class="a" style="left:3px;top:538.7px;width:5.8px;height:5.8px;border-radius:3px;background:#b0b0b0;border:1px solid #8a8a8a"></div>
<div class="a" style="left:14px;top:534.7px;font-size:8.75px;line-height:14.6px;font-weight:bold;color:#111;white-space:pre">Profit/Loss: 35.36  Credit: 0.00  Deposit: 0.00  Withdrawal: -2 320.64</div>
<div class="a" style="left:985px;width:97.4px;top:534.5px;font-size:9.5px;line-height:14.6px;font-weight:bold;color:#111;text-align:right">-2 285.28</div>
<div class="a" style="left:0;top:549.3px;width:1085px;height:12px;background:#fff"></div>
<!-- scrollbar -->
<div class="a" style="left:1085.5px;top:344.5px;width:12px;height:217px;background:#fff;border-left:1px solid #e8e8e8"></div>
<svg class="a" style="left:1085px;top:344px" width="13" height="13"><rect x="0.5" y="0.5" width="12" height="12" fill="#fff" stroke="#dcdcdc"/><path d="M3.5 7.5 l3 -3 l3 3" fill="none" stroke="#707070" stroke-width="0.9"/></svg>
<div class="a" style="left:1085.6px;top:402.2px;width:11.7px;height:146.5px;background:#cdcdcd"></div>
<div class="a" style="left:1088px;top:471px;width:6px;height:6px;border-top:1px solid #888;border-bottom:1px solid #888"><div class="a" style="left:0;top:2px;width:6px;height:1px;background:#888"></div></div>
<svg class="a" style="left:1085px;top:548.5px" width="13" height="13"><rect x="0.5" y="0.5" width="12" height="12" fill="#fff" stroke="#dcdcdc"/><path d="M3.5 5 l3 3 l3 -3" fill="none" stroke="#707070" stroke-width="0.9"/></svg>
<div class="a" style="left:1097.5px;top:344.5px;width:2.5px;height:216.5px;background:#e6e6e6"></div>

<!-- tabs -->
<div class="a" style="left:0;top:560.8px;width:1097.5px;height:1.2px;background:#7c7c7c"></div>
<div class="a" style="left:85.5px;top:561px;width:76px;height:15px;background:#fff;border:1px solid #808080;border-top:none;border-bottom:1.5px solid #808080"></div>
<div class="a tab" style="left:7px">Trade</div>
<div class="a tsep" style="left:36.5px"></div>
<div class="a tab" style="left:43.5px">Exposure</div>
<div class="a tab" style="left:93px;color:#111">Account History</div>
<div class="a tab" style="left:168.5px">News<span style="color:#e02020;font-weight:bold;font-size:7px;vertical-align:-2px">27</span></div>
<div class="a tsep" style="left:206.5px"></div>
<div class="a tab" style="left:214.5px">Alerts</div>
<div class="a tsep" style="left:243.5px"></div>
<div class="a tab" style="left:251px">Mailbox<span style="color:#e02020;font-weight:bold;font-size:7px;vertical-align:-2px">40</span></div>
<div class="a tsep" style="left:299.5px"></div>
<div class="a tab" style="left:306.5px">Company</div>
<div class="a tsep" style="left:351.5px"></div>
<div class="a tab" style="left:357.5px">Market</div>
<div class="a tsep" style="left:393px"></div>
<div class="a tab" style="left:399.5px">Signals</div>
<div class="a tsep" style="left:435px"></div>
<div class="a tab" style="left:441.5px">Articles</div>
<div class="a tsep" style="left:477.5px"></div>
<div class="a tab" style="left:484.5px">Code Base</div>
<div class="a tsep" style="left:532.5px"></div>
<div class="a tab" style="left:539.5px">Experts</div>
<div class="a tsep" style="left:575px"></div>
<div class="a tab" style="left:582px">Journal</div>
<div class="a tsep" style="left:617px"></div>
<!-- status bar -->
<div class="a" style="left:0;top:580px;width:1100px;height:1px;background:#d0d0d0"></div>
<div class="a sb" style="left:-13.5px;font-size:8.8px">Account history page</div>
<div class="a sbd" style="left:578.7px"></div>
<div class="a sb" style="left:583px">Default</div>
<div class="a sbd" style="left:666px"></div>
<div class="a sbd" style="left:742px"></div>
<div class="a sbd" style="left:794px"></div>
<div class="a sbd" style="left:845.7px"></div>
<div class="a sbd" style="left:895px"></div>
<div class="a sbd" style="left:946.7px"></div>
<div class="a sbd" style="left:996px"></div>
<svg class="a" style="left:1088px;top:586px" width="11" height="11"><path d="M10 2 L2 10 M10 5 L5 10 M10 8 L8 10" stroke="#a8a8a8" stroke-width="1"/></svg>
<svg class="a" style="left:0;top:0" width="1104" height="600" viewBox="0 0 1104 600"><rect x="998.40" y="584.8" width="1.5" height="6.40" fill="#6e9a2a"/><rect x="998.40" y="591.20" width="1.5" height="2.40" fill="#1d5878"/><rect x="1000.45" y="584.8" width="1.5" height="5.78" fill="#6e9a2a"/><rect x="1000.45" y="590.58" width="1.5" height="3.02" fill="#1d5878"/><rect x="1002.50" y="584.8" width="1.5" height="5.16" fill="#6e9a2a"/><rect x="1002.50" y="589.96" width="1.5" height="3.64" fill="#1d5878"/><rect x="1004.55" y="584.8" width="1.5" height="4.54" fill="#6e9a2a"/><rect x="1004.55" y="589.34" width="1.5" height="4.26" fill="#1d5878"/><rect x="1006.60" y="584.8" width="1.5" height="3.92" fill="#6e9a2a"/><rect x="1006.60" y="588.72" width="1.5" height="4.88" fill="#1d5878"/><rect x="1008.65" y="584.8" width="1.5" height="3.30" fill="#6e9a2a"/><rect x="1008.65" y="588.10" width="1.5" height="5.50" fill="#1d5878"/><rect x="1010.70" y="584.8" width="1.5" height="2.68" fill="#6e9a2a"/><rect x="1010.70" y="587.48" width="1.5" height="6.12" fill="#1d5878"/><rect x="1012.75" y="584.8" width="1.5" height="2.06" fill="#6e9a2a"/><rect x="1012.75" y="586.86" width="1.5" height="6.74" fill="#1d5878"/><rect x="1014.80" y="584.8" width="1.5" height="1.44" fill="#6e9a2a"/><rect x="1014.80" y="586.24" width="1.5" height="7.36" fill="#1d5878"/></svg>
<div class="a sb" style="left:1019.5px;font-size:8.9px">225/3 kb</div>
<svg class="a" style="left:0;top:597px" width="1104" height="3"><rect x="0" y="0" width="1104" height="3" fill="#63c7e7"/><rect x="0" y="0" width="1104" height="0.8" fill="#4b9fbd"/><rect x="495.5" y="0.6" width="41.5" height="2.4" fill="#d88a90"/><rect x="21" y="0" width="1" height="3" fill="#3a7f9a"/><rect x="64" y="0" width="1" height="3" fill="#3a7f9a"/><rect x="107.5" y="0" width="1" height="3" fill="#3a7f9a"/><rect x="150" y="0" width="1" height="3" fill="#3a7f9a"/><rect x="192.5" y="0" width="1" height="3" fill="#3a7f9a"/><rect x="235" y="0" width="1" height="3" fill="#3a7f9a"/><rect x="277.5" y="0" width="1" height="3" fill="#3a7f9a"/><rect x="320" y="0" width="1" height="3" fill="#3a7f9a"/><rect x="365" y="0" width="1" height="3" fill="#3a7f9a"/><rect x="407.5" y="0" width="1" height="3" fill="#3a7f9a"/><rect x="452.5" y="0" width="1" height="3" fill="#3a7f9a"/><rect x="495" y="0" width="1" height="3" fill="#3a7f9a"/><rect x="537.5" y="0" width="1" height="3" fill="#3a7f9a"/></svg>
</body></html>
